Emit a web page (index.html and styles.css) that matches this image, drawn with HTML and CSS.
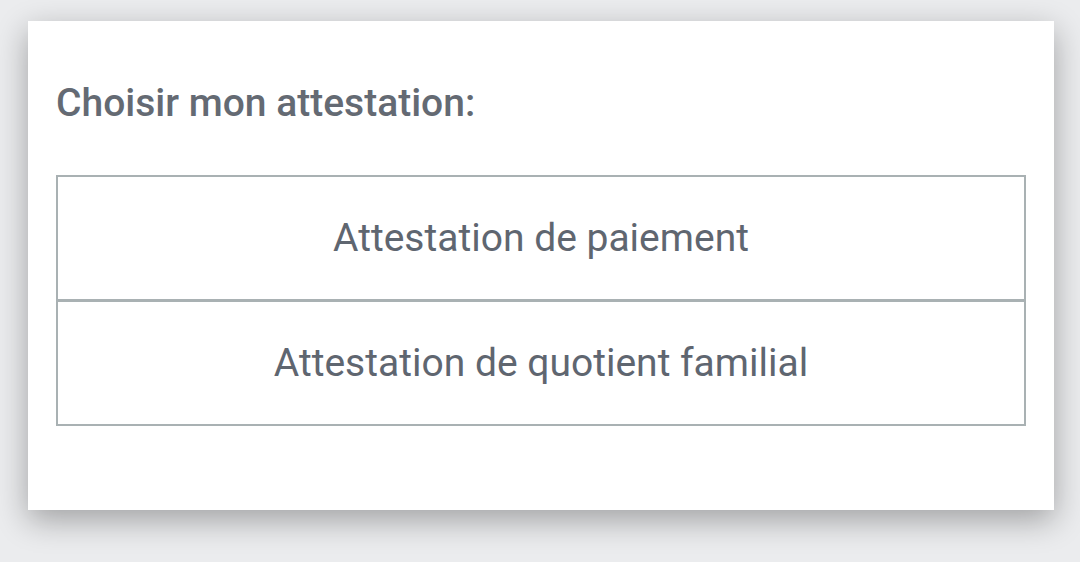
FILE: index.html
```html
<!DOCTYPE html>
<html lang="fr">
<head>
    <meta charset="UTF-8">
    <meta name="viewport" content="width=device-width, initial-scale=1.0">
    <title>Attestations</title>
    <link rel="stylesheet" href="styles.css">
</head>
<body>

    <div class="card">
        <h3 class="card-title">Choisir mon attestation:</h3>
        <div class="choices">
            <button class="choice-btn">Attestation de paiement</button>
            <button class="choice-btn">Attestation de quotient familial</button>
        </div>
    </div>

</body>
</html>
```

FILE: styles.css
```css
html {
    height: 100%;
}
body {
    font-family: Roboto, "Noto Sans", sans-serif;
    background: #ebecee;
    margin: 0;
    min-height: 100%;
    box-sizing: border-box;
    padding: 21px 26px 40px 28px;
}
.card {
    background: white;
    height: 489px;
    box-sizing: border-box;
    padding: 58px 28px 0 28px;
    box-shadow: 0px 10px 30px rgba(0, 0, 0, 0.32);
}
.card-title {
    margin: 0;
    color: #646a73;
    font-size: 39px;
    font-weight: 500;
    line-height: 48px;
}
.choices {
    margin-top: 48px;
    display: flex;
    flex-direction: column;
}
.choice-btn {
    height: 126px;
    background: white;
    border: 2px solid #a9b1b3;
    color: #5f6670;
    font-family: inherit;
    font-size: 39px;
    cursor: pointer;
}
.choice-btn + .choice-btn {
    margin-top: -1px;
}
```
